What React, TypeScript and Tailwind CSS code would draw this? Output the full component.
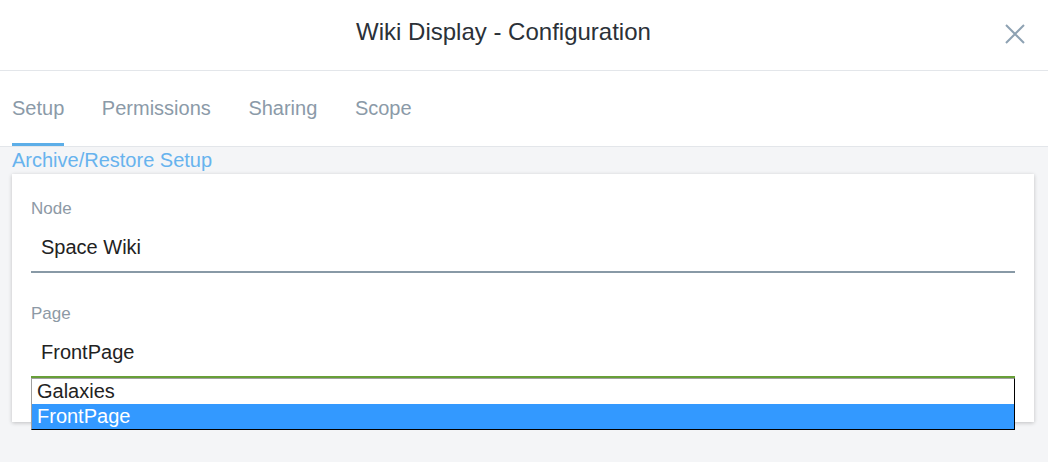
import { useState } from "react";

const tabs = ["Setup", "Permissions", "Sharing", "Scope"];
const pages = ["Galaxies", "FrontPage"];

export default function App() {
  const [activeTab, setActiveTab] = useState("Setup");
  const [page, setPage] = useState("FrontPage");

  return (
    <div className="w-[1048px] h-[462px] overflow-hidden bg-[#f4f5f7] font-['Liberation_Sans',Arial,sans-serif]">
      {/* header */}
      <div className="h-[71px] bg-white border-b border-[#e3e6ea] flex items-start">
        <h1 className="flex-1 pl-[2px] pt-[18px] text-center text-[24px] leading-[28px] text-[#2b3138]">
          Wiki Display - Configuration
        </h1>
        <button className="mt-[24px] mr-[23px] w-[20px] h-[20px]">
          <svg width="20" height="20" viewBox="0 0 20 20" fill="none" stroke="#8ea2b3" strokeWidth="2">
            <path d="M1 1L19 19M19 1L1 19" />
          </svg>
        </button>
      </div>

      {/* tabs */}
      <div className="h-[76px] bg-white border-b border-[#e3e6ea] flex gap-[37.6px] pl-[12px]">
        {tabs.map((t) => (
          <div
            key={t}
            onClick={() => setActiveTab(t)}
            className={
              "h-[75px] pt-[2px] flex items-center text-[20px] text-[#8b9aa8] cursor-pointer border-b-[3px] " +
              (activeTab === t ? "border-[#5caee8]" : "border-transparent")
            }
          >
            {t}
          </div>
        ))}
      </div>

      <div className="mt-[1px] pl-[12px] text-[20px] leading-[24px] text-[#67b3ee]">Archive/Restore Setup</div>

      {/* card */}
      <div className="mt-[2px] ml-[12px] w-[1022px] bg-white px-[19px] pt-[25px] pb-[44px] shadow-[0_1px_4px_rgba(0,0,0,0.22)]">
        <div className="text-[17px] leading-[20px] text-[#8d99a5]">Node</div>
        <div className="mt-[4px] h-[50px] pl-[10px] pt-[12px] border-b-2 border-[#8899a6] text-[20px] leading-[24px] text-[#222]">
          Space Wiki
        </div>

        <div className="mt-[31px] text-[17px] leading-[20px] text-[#8d99a5]">Page</div>
        <div className="relative">
          <div className="mt-[4px] h-[50px] pl-[10px] pt-[12px] border-b-2 border-[#689f38] text-[20px] leading-[24px] text-[#222]">
            {page}
          </div>
          <div className="absolute top-full left-0 right-0 bg-white border-t border-l border-[#a0a0a0] border-r border-b border-r-black border-b-black">
            {pages.map((p) => (
              <div
                key={p}
                onClick={() => setPage(p)}
                className={
                  "h-[25px] px-[5px] text-[20px] leading-[25px] cursor-default " +
                  (p === page ? "bg-[#3399ff] text-white" : "text-[#222]")
                }
              >
                {p}
              </div>
            ))}
          </div>
        </div>
      </div>
    </div>
  );
}
